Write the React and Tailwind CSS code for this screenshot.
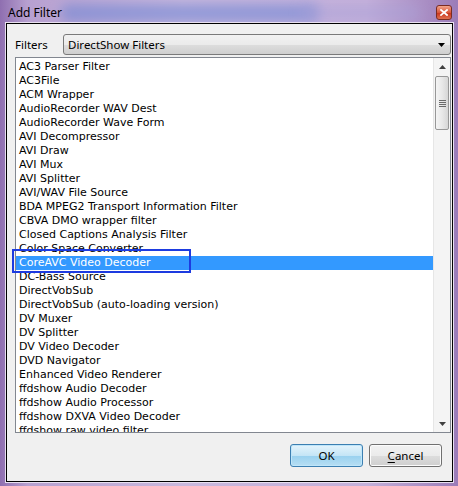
import React from "react";

const items = [
  "AC3 Parser Filter",
  "AC3File",
  "ACM Wrapper",
  "AudioRecorder WAV Dest",
  "AudioRecorder Wave Form",
  "AVI Decompressor",
  "AVI Draw",
  "AVI Mux",
  "AVI Splitter",
  "AVI/WAV File Source",
  "BDA MPEG2 Transport Information Filter",
  "CBVA DMO wrapper filter",
  "Closed Captions Analysis Filter",
  "Color Space Converter",
  "CoreAVC Video Decoder",
  "DC-Bass Source",
  "DirectVobSub",
  "DirectVobSub (auto-loading version)",
  "DV Muxer",
  "DV Splitter",
  "DV Video Decoder",
  "DVD Navigator",
  "Enhanced Video Renderer",
  "ffdshow Audio Decoder",
  "ffdshow Audio Processor",
  "ffdshow DXVA Video Decoder",
  "ffdshow raw video filter",
];

export default function App() {
  return (
    <div className="relative w-[458px] h-[486px] overflow-hidden flex flex-col bg-[linear-gradient(90deg,#8f6fb0_0%,#b7a0d0_6%,#c9b8dd_40%,#c4b0da_80%,#9b7cb8_100%)] font-['Noto_Sans','Liberation_Sans',sans-serif] text-[12px] text-black">
      {/* title glow */}
      <div className="absolute left-[60px] top-[4px] w-[260px] h-[18px] rounded-full bg-[#6f86d4] opacity-60 blur-[6px]" />
      <div className="absolute left-[300px] top-[6px] w-[120px] h-[14px] rounded-full bg-[#a8a0d8] opacity-50 blur-[6px]" />
      {/* title bar */}
      <div className="relative h-[23px] flex items-center justify-between pl-[8px] pr-[6px] shrink-0">
        <span className="text-[12px] leading-none mt-[3px] text-black">Add Filter</span>
        <div className="w-[16px] h-[15px] mt-[1px] rounded-[3px] border border-[#7a2c22] bg-[linear-gradient(180deg,#f2a48c_0%,#d9573a_50%,#c8351c_55%,#e0714f_100%)] flex items-center justify-center">
          <svg width="8" height="7" viewBox="0 0 8 7">
            <path d="M1 1 L7 6 M7 1 L1 6" stroke="#ffffff" strokeWidth="1.8" strokeLinecap="square" />
          </svg>
        </div>
      </div>
      {/* client */}
      <div className="relative flex-1 ml-[6px] mr-[5px] mb-[4px] border border-black bg-[#f0f0f0] flex flex-col shadow-[0_0_0_1px_#e8e0f0]">
        {/* filters row */}
        <div className="flex items-center mt-[10px] pl-[8px] pr-[1px] h-[21px]">
          <span className="w-[48px] text-[11.5px] leading-none">Filters</span>
          <div className="flex-1 h-[21px] rounded-[3px] border border-[#7a7a7a] bg-[linear-gradient(180deg,#f2f2f2_0%,#ebebeb_50%,#dddddd_51%,#cfcfcf_100%)] flex items-center justify-between pl-[4px] pr-[5px]">
            <span className="leading-none text-[11.5px]">DirectShow Filters</span>
            <svg width="7" height="4" viewBox="0 0 7 4">
              <path d="M0 0 H7 L3.5 4 Z" fill="#000000" />
            </svg>
          </div>
        </div>
        {/* list box */}
        <div className="mt-[2px] ml-[8px] mr-[1px] h-[376px] border border-[#828790] bg-white flex overflow-hidden">
          <div className="flex-1 pt-[2px] overflow-hidden font-['DejaVu_Sans','Noto_Sans',sans-serif] text-[11px]">
            {items.map((t, i) => (
              <div
                key={t}
                className={
                  i === 14
                    ? "h-[14px] leading-[14px] pl-[3px] bg-[#3399ff] text-white whitespace-nowrap"
                    : "h-[14px] leading-[14px] pl-[3px] whitespace-nowrap"
                }
              >
                {t}
              </div>
            ))}
          </div>
          {/* scrollbar */}
          <div className="w-[17px] bg-[#f4f4f4] border-l border-[#e6e6e6] flex flex-col">
            <div className="h-[17px] flex items-center justify-center">
              <svg width="7" height="4" viewBox="0 0 7 4">
                <path d="M0 4 H7 L3.5 0 Z" fill="#404040" />
              </svg>
            </div>
            <div className="mt-[1px] mx-[1px] h-[54px] rounded-[2px] border border-[#979797] bg-[linear-gradient(90deg,#f4f4f4_0%,#e8e8e8_50%,#d6d6d6_100%)] flex items-center justify-center">
              <div className="flex flex-col gap-[1px]">
                <div className="w-[7px] h-[1px] bg-[#6a6a6a]" />
                <div className="w-[7px] h-[1px] bg-[#6a6a6a]" />
                <div className="w-[7px] h-[1px] bg-[#6a6a6a]" />
                <div className="w-[7px] h-[1px] bg-[#6a6a6a]" />
              </div>
            </div>
            <div className="flex-1" />
            <div className="h-[17px] flex items-center justify-center">
              <svg width="7" height="4" viewBox="0 0 7 4">
                <path d="M0 0 H7 L3.5 4 Z" fill="#404040" />
              </svg>
            </div>
          </div>
        </div>
        {/* buttons */}
        <div className="flex justify-end gap-[6px] mt-[11px] pr-[10px]">
          <div className="w-[73px] h-[23px] rounded-[3px] border border-[#3c7fb1] bg-[linear-gradient(180deg,#e5f4fc_0%,#c4e5f6_50%,#98d1ef_51%,#b7def3_100%)] shadow-[inset_0_0_0_1px_#bfe6fa] flex items-center justify-center text-[11.5px]">
            OK
          </div>
          <div className="w-[73px] h-[23px] rounded-[3px] border border-[#707070] bg-[linear-gradient(180deg,#f2f2f2_0%,#ebebeb_50%,#dddddd_51%,#cfcfcf_100%)] shadow-[inset_0_0_0_1px_#fcfcfc] flex items-center justify-center text-[11.5px]">
            <span>
              <span className="underline underline-offset-2">C</span>ancel
            </span>
          </div>
        </div>
      </div>
      {/* annotation overlay */}
      <div className="absolute left-[12px] top-[249px] w-[179px] h-[24px] border-2 border-[#1d3be0]" />
    </div>
  );
}
